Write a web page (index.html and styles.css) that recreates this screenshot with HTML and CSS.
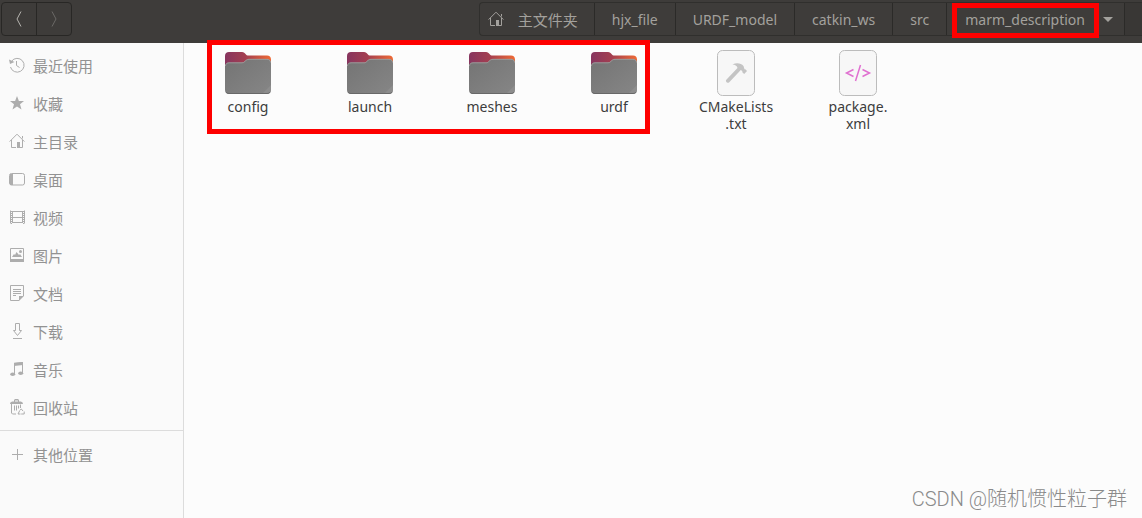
FILE: index.html
```html
<!DOCTYPE html>
<html lang="zh-CN">
<head>
  <meta charset="UTF-8" />
  <meta name="viewport" content="width=device-width, initial-scale=1.0" />
  <title>marm_description</title>
  <link rel="stylesheet" href="styles.css">
</head>
<body>

<!-- shared icon shapes -->
<svg class="defs" aria-hidden="true">
  <defs>
    <linearGradient id="folderBack" x1="0" y1="0" x2="1" y2="0">
      <stop offset="0" stop-color="#87355f" />
      <stop offset="0.45" stop-color="#a43f50" />
      <stop offset="1" stop-color="#ef6a35" />
    </linearGradient>
    <linearGradient id="folderFront" x1="0" y1="0" x2="1" y2="1">
      <stop offset="0" stop-color="#747474" />
      <stop offset="1" stop-color="#868686" />
    </linearGradient>
    <symbol id="folder" viewBox="0 0 46 42">
      <path fill="url(#folderBack)" d="M4 0h13c2 0 2.500 1 3.500 2s1.500 1.500 3 1.500H42c2.500 0 4 1.500 4 4V16H0V4c0-2.500 1.500-4 4-4z" />
      <path fill="url(#folderFront)" d="M4 10.500h13c1.500 0 2-.5 3-1.500s2-2 4-2h18c2.500 0 4 1.500 4 4v27c0 2.500-1.500 4-4 4H4c-2.500 0-4-1.500-4-4V14.500c0-2.500 1.500-4 4-4z" />
      <path fill="none" stroke="#a5a5a5" stroke-width="0.8" d="M.5 14c0-2 1.500-3.200 3.500-3.200h13c1.500 0 2-.5 3-1.500s2-2 4-2h18c2 0 3.500 1.200 3.500 3.200" />
      <path fill="#929292" d="M46 33v5c0 2.500-1.500 4-4 4h-5z" opacity="0.6" />
      <path fill="none" stroke="#686868" d="M1 40c.7 1 1.700 1.500 3 1.500h38c1.300 0 2.300-.5 3-1.500" />
    </symbol>
    <symbol id="home" viewBox="0 0 16 16">
      <path fill="none" stroke="currentColor" d="M.6 8.600 8 1.200l7.400 7.400M2.500 7v7.500H7M13.500 3v2.500M13.500 7v7.500H11" />
      <path fill="currentColor" d="M8 9h3v6H8z" />
    </symbol>
  </defs>
</svg>

<header class="headerbar">
  <div class="nav-buttons">
    <button type="button" aria-label="后退"><svg width="16" height="16" viewBox="0 0 16 16"><path d="M10 .5 6 8l4 7.500" /></svg></button>
    <button type="button" aria-label="前进" disabled><svg width="16" height="16" viewBox="0 0 16 16"><path d="M6 .5 10 8l-4 7.500" /></svg></button>
  </div>
  <nav class="pathbar">
    <button type="button" class="path-home"><svg width="16" height="16"><use href="#home" /></svg>主文件夹</button>
    <button type="button">hjx_file</button>
    <button type="button">URDF_model</button>
    <button type="button">catkin_ws</button>
    <button type="button">src</button>
    <button type="button" class="path-current"><span class="marked">marm_description</span><span class="arrow"></span></button>
    <span class="path-end"></span>
  </nav>
</header>

<div class="window">
  <aside class="sidebar">
    <ul>
      <li><a href="#"><svg viewBox="0 0 16 16"><path class="line" d="M2.600 4.200A6.900 6.900 0 1 1 1.500 10M7.500 4v4.500l3 2" /><path class="fill" d="M0 2.500 1 7l4.500-2z" /></svg>最近使用</a></li>
      <li><a href="#"><svg viewBox="0 0 16 16"><path class="fill" d="m8 1 1.900 5H15l-4 3.300 1.500 5.200L8 11.400l-4.500 3.100L5 9.300 1 6h5.100z" /></svg>收藏</a></li>
      <li><a href="#"><svg><use href="#home" /></svg>主目录</a></li>
      <li><a href="#"><svg viewBox="0 0 16 16"><rect class="line" x=".5" y="2.500" width="15" height="11.500" rx="2" /><path class="fill" d="M1 3h3v11H1z" /></svg>桌面</a></li>
      <li><a href="#"><svg viewBox="0 0 16 16"><path class="line" d="M1.500 1.500v13M3.500 2v12M13.500 2v12M15.500 1.500v13M3 2.500h10M3 8.500h10M3 13.500h10" /><path class="line dots" d="M2.500 2v13M14.500 2v13" /></svg>视频</a></li>
      <li><a href="#"><svg viewBox="0 0 16 16"><path class="line" d="M1.500 1.500h13v12h-13z" /><path class="fill" d="M1 12h14v3H1zM3 10l2-3 1 1 1.500-3L10 8l1-1 2 3z" /><circle class="fill" cx="11.500" cy="4.500" r="1.500" /></svg>图片</a></li>
      <li><a href="#"><svg viewBox="0 0 16 16"><path class="line" d="M10 15.500H1.500V.5h13V11M4 4.500h8M4 6.500h8M4 8.500h8M4 10.500h3" /><path class="fill" d="M10 11h5l-5 5z" /></svg>文档</a></li>
      <li><a href="#"><svg viewBox="0 0 16 16"><path class="line" d="M6.500.5h4v7h2l-4 5-4-5h2zM4 15.500h9" /></svg>下载</a></li>
      <li><a href="#"><svg viewBox="0 0 16 16"><path class="line" d="M5.500 13V2.500l8-1V12" /><path class="fill" d="M5 1.800 14 1v3L5 5z" /><ellipse class="fill" cx="3.700" cy="13.300" rx="2.500" ry="1.800" /><ellipse class="fill" cx="11.700" cy="12.300" rx="2.500" ry="1.800" /></svg>音乐</a></li>
      <li><a href="#"><svg viewBox="0 0 16 16"><path class="fill" d="M1 5c0-2 1.500-2.500 4-2.500V1l1-1h3l1 1v1.500c2.500 0 4 .5 4 2.500zM6 1.500v1h3v-1z" /><path class="line" d="M2.500 5v9l1 1H7M5.500 6.500v5M7.500 6.500v5M9.500 6.500v3M11.500 5.500V9M10.500 11.500l1.800-1.500 1.700 2M15.200 12.500v2.500h-3M10.500 12 9 15h2.500" /></svg>回收站</a></li>
    </ul>
    <ul class="others">
      <li><a href="#"><svg viewBox="0 0 16 16"><path class="line" d="M8.500 3v11M3 8.500h11" /></svg>其他位置</a></li>
    </ul>
  </aside>

  <main class="files">
    <div class="file"><svg class="icon-folder"><use href="#folder" /></svg><span>config</span></div>
    <div class="file"><svg class="icon-folder"><use href="#folder" /></svg><span>launch</span></div>
    <div class="file"><svg class="icon-folder"><use href="#folder" /></svg><span>meshes</span></div>
    <div class="file"><svg class="icon-folder"><use href="#folder" /></svg><span>urdf</span></div>
    <div class="file">
      <svg class="icon-doc" viewBox="0 0 38 46"><rect x=".5" y=".5" width="37" height="45" rx="5" fill="#f7f7f7" stroke="#bcbcbc" /><path fill="#c4c4c4" d="M15.500 14.500c4-2 8.500-1.500 11 1.500l1 3.200 1.200.3 1.300 1.500-2.800 2.900-1.700-1.300-.3-1.500-1.400-1L12 32.500c-1.500 1-4-1-2.700-2.800L20.500 18c-.5-2.500-2.500-3.300-5-3.500z" /></svg>
      <span>CMakeLists<br>.txt</span>
    </div>
    <div class="file">
      <svg class="icon-doc" viewBox="0 0 38 46"><rect x=".5" y=".5" width="37" height="45" rx="5" fill="#f7f7f7" stroke="#bcbcbc" /><path fill="none" stroke="#e070d0" stroke-width="1.500" d="m14.500 19.500-7 3.500 7 3.500M21.500 15l-5 16M23.500 19.500l7 3.500-7 3.500" /></svg>
      <span>package.<br>xml</span>
    </div>
    <div class="folders-mark"></div>
  </main>
</div>

<div class="watermark">CSDN @随机惯性粒子群</div>

</body>
</html>
```
FILE: styles.css
```css
* { box-sizing: border-box; }

body {
  margin: 0;
  min-height: 100vh;
  display: flex;
  flex-direction: column;
  background-color: #fcfcfc;
  font-family: "Noto Sans", "Noto Sans CJK SC", sans-serif;
  font-size: 15px;
  color: #3d3d3d;
  overflow: hidden;
}

.defs {
  position: absolute;
  width: 0;
  height: 0;
}

button {
  margin: 0;
  padding: 0;
  border: none;
  background: none;
  color: inherit;
  font: inherit;
}

/* header bar */
.headerbar {
  display: flex;
  justify-content: space-between;
  height: 43px;
  padding: 2px 0 7px 1px;
  background-color: #3e3c3a;
  color: #a3a19d;
}

.nav-buttons {
  display: flex;
  border: 1px solid #282725;
  border-radius: 4px;
}

.nav-buttons button {
  display: flex;
  align-items: center;
  justify-content: center;
  width: 34px;
}

.nav-buttons button + button {
  width: 35px;
  border-left: 1px solid #282725;
}

.nav-buttons path {
  fill: none;
  stroke: #b5b3af;
}

.nav-buttons button:disabled path { stroke: #6b6967; }

.pathbar {
  display: flex;
  border: 1px solid #302f2d;
  border-right: none;
  border-radius: 4px 0 0 4px;
  font-size: 14px;
}

.pathbar button {
  display: flex;
  align-items: center;
  padding: 0 17px;
  border-right: 1px solid #2b2a28;
}

.pathbar .path-home {
  gap: 14px;
  padding: 0 16px 0 8px;
  font-family: "Liberation Sans", "Noto Sans CJK SC", sans-serif;
  font-size: 15px;
}

.pathbar .path-current {
  gap: 16px;
  padding: 0 11px 0 16px;
}

.marked {
  position: relative;
  padding: 0 2px;
}

.marked::after {
  content: "";
  position: absolute;
  inset: -7px -12px -9px -11px;
  border: 5px solid #fe0000;
}

.arrow {
  border: 5px solid transparent;
  border-top-color: #a3a19d;
  border-bottom: none;
}

.path-end {
  width: 17px;
  background-color: #393735;
}

/* sidebar */
.window {
  flex: 1;
  display: flex;
}

.sidebar {
  width: 184px;
  padding-top: 4px;
  background-color: #fafafa;
  border-right: 1px solid #dcdcdc;
  font-family: "Liberation Sans", "Noto Sans CJK SC", sans-serif;
}

.sidebar ul {
  margin: 0;
  padding: 0;
  list-style: none;
}

.sidebar .others {
  margin-top: 3px;
  padding-top: 5px;
  border-top: 1px solid #dcdcdc;
}

.sidebar a {
  display: flex;
  align-items: center;
  gap: 8px;
  height: 38px;
  padding: 0 0 2px 9px;
  color: #929292;
  text-decoration: none;
}

.sidebar svg {
  width: 16px;
  height: 16px;
  color: #adadad;
}

.line {
  fill: none;
  stroke: currentColor;
}

.fill { fill: currentColor; }

.dots { stroke-dasharray: 1 1; }

/* files */
.files {
  flex: 1;
  position: relative;
  display: grid;
  grid-template-columns: repeat(auto-fill, 122px);
  align-content: start;
  padding: 7px 0 0 3px;
}

.file {
  display: flex;
  flex-direction: column;
  align-items: center;
  gap: 2px;
  font-size: 14px;
  line-height: 17px;
  text-align: center;
}

.icon-folder {
  width: 46px;
  height: 46px;
}

.icon-doc {
  width: 38px;
  height: 46px;
}

.folders-mark {
  position: absolute;
  top: -3px;
  left: 23px;
  width: 443px;
  height: 94px;
  border: 5px solid #fe0000;
}

.watermark {
  position: absolute;
  right: 15px;
  bottom: 4px;
  font-family: Roboto, "Noto Sans CJK SC", sans-serif;
  font-size: 20px;
  font-weight: 300;
  line-height: 30px;
  color: #8a8a8a;
}
```
